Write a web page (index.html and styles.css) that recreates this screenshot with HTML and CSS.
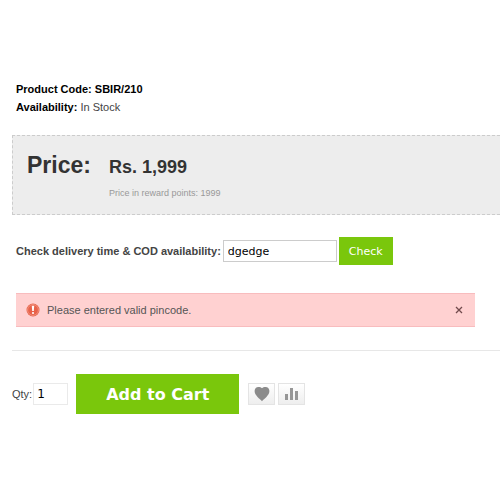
FILE: index.html
```
<!DOCTYPE html>
<html lang="en">
<head>
<meta charset="utf-8">
<meta name="viewport" content="width=device-width, initial-scale=1">
<title>Product SBIR/210</title>
<link rel="stylesheet" href="styles.css">
</head>
<body>
<div class="product">
	<div class="description">
		<div><b>Product Code: SBIR/210</b></div>
		<div><b>Availability:</b> In Stock</div>
	</div>
	<div class="price">
		<span class="price-label">Price:</span>
		<div class="price-info">
			<div class="price-value">Rs. 1,999</div>
			<div class="reward">Price in reward points: 1999</div>
		</div>
	</div>
	<form class="delivery">
		<label for="pincode">Check delivery time &amp; COD availability:</label>
		<input type="text" id="pincode" name="pincode" value="dgedge">
		<button type="button" class="btn">Check</button>
	</form>
	<div class="warning" role="alert">
		<svg class="warning-icon" viewBox="0 0 14 14">
			<circle cx="7" cy="7" r="6.5" fill="#e8624a"/>
			<circle cx="7" cy="7" r="5.4" fill="none" stroke="#f0917c"/>
			<path d="M5.8 2.8h2.4L7.8 8H6.2z" fill="#fff"/>
			<circle cx="7" cy="10" r="1.1" fill="#fff"/>
		</svg>
		<span class="warning-text">Please entered valid pincode.</span>
		<button type="button" class="close" aria-label="Close">
			<svg viewBox="0 0 8 8"><path d="M1 1l6 6M7 1L1 7" fill="none" stroke="#714b4d" stroke-width="1.3"/></svg>
		</button>
	</div>
	<form class="cart">
		<label for="qty">Qty:</label>
		<input type="text" id="qty" name="quantity" value="1">
		<button type="button" class="btn btn-cart">Add to Cart</button>
		<button type="button" class="tool" aria-label="Add to Wish List">
			<svg viewBox="0 0 16 16"><path d="M8 15.200C6 13 .6 9.600.6 5.100.6 2.600 2.300 1 4.400 1 6 1 7.300 1.400 8 2.300 8.700 1.400 10 1 11.600 1c2.100 0 3.800 1.600 3.800 4.100C15.400 9.600 10 13 8 15.200z" fill="#8b8b8b"/></svg>
		</button>
		<button type="button" class="tool" aria-label="Add to Compare">
			<svg viewBox="0 0 16 16"><path d="M1 8h3v6H1zM6 2h3v12H6zM11 5h3v9h-3z" fill="#969696"/></svg>
		</button>
	</form>
</div>
</body>
</html>
```

FILE: styles.css
```
body{margin:0;background:#fff;color:#444;font:11px/18px "Liberation Sans",Arial,sans-serif;}
form{margin:0;}
input,button{box-sizing:border-box;margin:0;border-radius:0;}
button{cursor:pointer;}
svg{display:block;}
.product{padding:80px 0 0 12px;}
.description{padding-left:4px;}
.description b{color:#000;}
.price{display:flex;align-items:flex-start;margin-top:19px;padding:14px 14px 12px;border:1px dashed #ccc;border-right:0;background:#ededed;color:#333;}
.price-label{width:82px;font-size:23px;line-height:30px;font-weight:bold;}
.price-value{font-size:18px;line-height:34px;font-weight:bold;}
.reward{font-size:9px;line-height:18px;color:#999;}
.delivery{display:flex;align-items:center;gap:2px;margin-top:22px;padding-left:4px;}
.delivery label{font-weight:bold;}
.delivery input{width:114px;height:22px;padding:0 4px;border:1px solid #ccc;background:#fff;color:#000;font:11px "DejaVu Sans",sans-serif;}
.btn{height:28px;padding:0 10px;border:0;background:#7ac70c;color:#fff;font:11px "DejaVu Sans",sans-serif;}
.warning{display:flex;align-items:center;margin:28px 25px 0 4px;padding:7px 10px;border:1px solid #f8bcbe;border-width:1px 0;background:#ffd1d1;}
.warning-icon{width:14px;height:14px;margin-right:7px;}
.warning-text{flex:1;color:#555;}
.close{padding:2px;border:0;background:none;}
.close svg{width:8px;height:8px;}
.cart{display:flex;align-items:center;margin-top:23px;padding-top:23px;border-top:1px solid #e7e7e7;}
.cart label{margin-right:1px;}
.cart input{width:35px;height:22px;padding:0 3px;border:1px solid #eaeaea;background:#fff;color:#000;font:12px "DejaVu Sans",sans-serif;}
.btn-cart{height:40px;margin:0 9px 0 8px;padding:0 30px;font:bold 16px "DejaVu Sans",sans-serif;}
.tool{width:27px;height:22px;margin-right:3px;padding:2px 5px;border:1px solid #e4e4e4;background:linear-gradient(#fff,#eee);}
.tool svg{width:16px;height:16px;}
```
